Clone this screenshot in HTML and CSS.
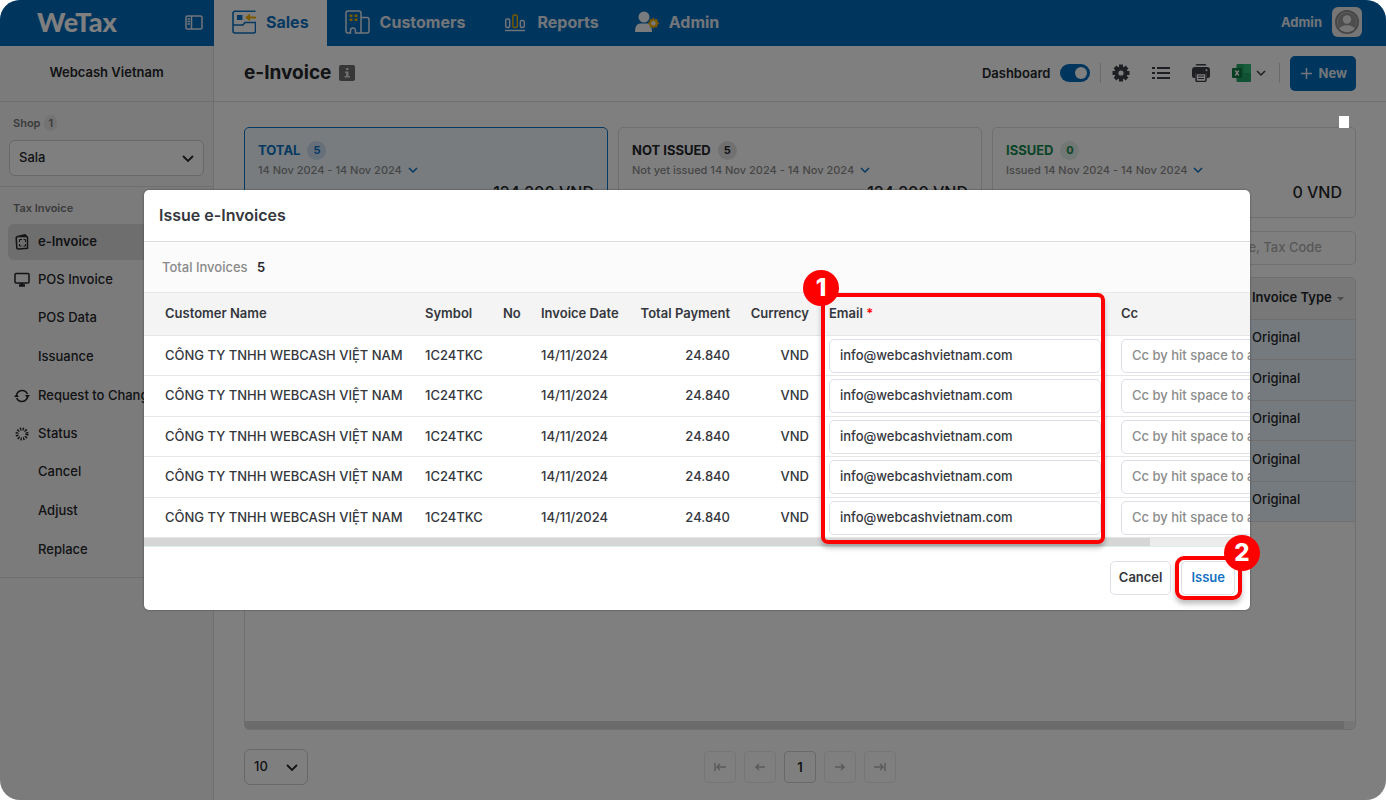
FILE: index.html
```html
<!DOCTYPE html>
<html lang="en">
<head>
<meta charset="utf-8">
<meta name="viewport" content="width=device-width, initial-scale=1">
<title>WeTax - e-Invoice</title>
<link rel="stylesheet" href="styles.css">
</head>
<body>
<div class="app">
  <header class="topbar">
    <div class="brand">
      <span class="logo">WeTax</span>
      <button class="icon-btn" aria-label="Toggle sidebar">
        <svg width="18" height="15" viewBox="0 0 18 15" fill="none" stroke="currentColor" stroke-width="1.5"><rect x="1" y="1" width="16" height="13" rx="1.5"/><path d="M6.5 1v13M2.5 4h2.500M2.500 6.500h2.500M2.500 9h2.500"/></svg>
      </button>
    </div>
    <nav class="tabs">
      <a class="tab tab-active" href="#">
        <svg width="24" height="24" viewBox="0 0 24 24" fill="none" stroke="#0a72c4" stroke-width="1.6"><path d="M23.500 1.200H3A2 2 0 0 0 1 3.200V21a2 2 0 0 0 2 2h18.500a2 2 0 0 0 2-2V12.500H13l-2 2.500H1"/><rect x="5" y="5" width="5.500" height="5" fill="#0a72c4" stroke="none"/><path d="M24 7.500h-7" stroke="#f5b301" stroke-width="2"/><path d="M18 3.800L13 7.500l5 3.700z" fill="#f5b301" stroke="none"/></svg>
        Sales
      </a>
      <a class="tab" href="#">
        <svg width="25" height="24" viewBox="0 0 25 24" fill="none" stroke="#e4eaf2" stroke-width="1.500"><path d="M16 23H22a2 2 0 0 0 2-2V9.500a2 2 0 0 0-2-2h-6M5.500 23H3a2 2 0 0 1-2-2V3a2 2 0 0 1 2-2h11a2 2 0 0 1 2 2v20h-5.500v-2.500a2.500 2.500 0 0 0-5 0z"/><path d="M4.500 4.500h3v2.500h-3zM9.500 4.500h3v2.500h-3zM4.500 8.500h3V11h-3zM9.500 8.500h3V11h-3z" fill="#f5b301" stroke="none"/></svg>
        Customers
      </a>
      <a class="tab" href="#">
        <svg width="26" height="24" viewBox="-2 0 26 24" fill="none" stroke="#e4eaf2" stroke-width="1.400"><rect x="2.700" y="9" width="4" height="8.500" rx="1.500"/><rect x="17.300" y="10.500" width="4" height="7" rx="1.500"/><rect x="9.900" y="5" width="4.400" height="12.500" rx="1.500" stroke="#f5b301"/><path d="M2 20.500h20"/></svg>
        Reports
      </a>
      <a class="tab" href="#">
        <svg width="24" height="22" viewBox="0 0 24 22"><circle cx="9" cy="6" r="5.500" fill="#f4f6f8"/><path d="M0 21c0-6 2-8.500 6-8.500h6c3 0 5 2.500 5 8.500z" fill="#f4f6f8"/><path d="M18.500 6.500l1.300 2 2.300-.6.400 2.400 1.500 1.900-1.500 1.900-.4 2.400-2.300-.6-1.300 2-1.400-2-2.200.6-.4-2.400-1.500-1.900 1.500-1.900.4-2.400 2.200.6z" fill="#f5b301"/><circle cx="18.400" cy="12.200" r="2.200" fill="#f4f6f8"/></svg>
        Admin
      </a>
    </nav>
    <div class="account">
      <span>Admin</span>
      <span class="avatar"><svg width="24" height="24" viewBox="0 0 24 24"><circle cx="12" cy="12" r="11" fill="#d4d4d4" stroke="#8c8c8c" stroke-width="2"/><circle cx="12" cy="12" r="9.500" fill="#9a9a9a"/><circle cx="12" cy="9.500" r="4.200" fill="#ececec"/><path d="M4.500 19c1.500-5 13.500-5 15 0a10.500 10.500 0 0 1-15 0z" fill="#ececec"/></svg></span>
    </div>
  </header>

  <div class="body">
    <aside class="sidebar">
      <div class="org">Webcash Vietnam</div>
      <div class="shop">
        <label class="side-label" for="shop">Shop <span class="count">1</span></label>
        <div class="select">
          <select id="shop"><option>Sala</option></select>
          <svg class="caret" width="12" height="8" viewBox="0 0 12 8" fill="none" stroke="currentColor" stroke-width="1.800"><path d="M1 1l5 5 5-5"/></svg>
        </div>
      </div>
      <nav class="menu">
        <div class="side-label">Tax Invoice</div>
        <ul>
          <li><a class="item item-active" href="#"><svg width="14" height="16" viewBox="0 0 14 16" fill="none" stroke="currentColor" stroke-width="1.500"><path d="M3 2.500L10 .8l1.500 1.500M3 2.500h8.500a1 1 0 0 1 1 1v10.800L3.500 15a1.500 1.500 0 0 1-1.700-1.400L1.200 4A1.500 1.500 0 0 1 3 2.500z"/><path d="M4.500 8V5.500H7M8.500 5.500h2V8M10.500 10v2h-2M6.500 12h-2v-2" stroke-width="1"/></svg>e-Invoice</a></li>
          <li><a class="item" href="#"><svg width="16" height="15" viewBox="0 0 16 15" fill="none" stroke="currentColor" stroke-width="1.500"><rect x="1" y="1.500" width="14" height="9.500" rx="1"/><path d="M5 13.500h6M8 11v2" stroke-width="2.500"/></svg>POS Invoice</a></li>
          <li><a class="item sub" href="#">POS Data</a></li>
          <li><a class="item sub" href="#">Issuance</a></li>
          <li><a class="item" href="#"><svg width="16" height="16" viewBox="0 0 16 16" fill="none" stroke="currentColor" stroke-width="1.600"><path d="M2.500 9A5.500 5.500 0 0 1 8 2.500c2.500 0 4.500 1.300 5.300 3.500M13.500 7A5.500 5.500 0 0 1 8 13.500c-2.500 0-4.500-1.300-5.300-3.500" /><path d="M11 7h5l-2.500 3zM0 9h5L2.500 6z" fill="currentColor" stroke="none"/></svg>Request to Change</a></li>
          <li><a class="item" href="#"><svg width="16" height="16" viewBox="0 0 16 16" fill="none" stroke="currentColor" stroke-width="3"><circle cx="8" cy="8" r="5" stroke-dasharray="1.310 1.308"/></svg>Status</a></li>
          <li><a class="item sub" href="#">Cancel</a></li>
          <li><a class="item sub" href="#">Adjust</a></li>
          <li><a class="item sub" href="#">Replace</a></li>
        </ul>
      </nav>
    </aside>

    <main class="main">
      <div class="titlebar">
        <h1>e-Invoice</h1>
        <svg width="16" height="16" viewBox="0 0 16 16"><rect width="16" height="16" rx="2" fill="#6e6e6e"/><path d="M7 3h2.500v2H7zM6 6.500h3.500V11H11v1.500H5.500V11H7V8H6z" fill="#ddd"/></svg>
        <div class="tools">
          <label class="dash">Dashboard <input type="checkbox" class="toggle" checked></label>
          <span class="vr"></span>
          <div class="tool-icons">
            <button class="icon-btn" aria-label="Settings"><svg width="18" height="18" viewBox="0 0 18 18"><g stroke="currentColor" stroke-width="4"><path d="M9 .5v17M.5 9h17M3 3l12 12M15 3L3 15"/></g><circle cx="9" cy="9" r="6.500" fill="currentColor"/><circle cx="9" cy="9" r="2.600" fill="#fff"/></svg></button>
            <button class="icon-btn" aria-label="List"><svg width="18" height="16" viewBox="0 0 18 16" stroke="currentColor" stroke-width="2"><path d="M0 3h3M0 8h3M0 13h3M5 3h13M5 8h13M5 13h13"/></svg></button>
            <button class="icon-btn" aria-label="Print"><svg width="18" height="18" viewBox="0 0 18 18"><path d="M3.500 1.500a1.500 1.500 0 0 1 1.500-1.500h8a1.500 1.500 0 0 1 1.500 1.500H3.500zM3 3h12a3 3 0 0 1 3 3v6a2 2 0 0 1-2 2h-1V9H3v5H2a2 2 0 0 1-2-2V6a3 3 0 0 1 3-3z" fill="currentColor"/><path d="M4 9.500h10V16a1.500 1.500 0 0 1-1.500 1.500h-7A1.500 1.500 0 0 1 4 16z" fill="#fff" stroke="currentColor" stroke-width="1.500"/><path d="M6 12h6M6 14.500h6" stroke="currentColor"/><circle cx="14.500" cy="6.300" r="1" fill="#fff"/></svg></button>
            <button class="icon-btn excel" aria-label="Export to Excel"><svg width="19" height="18" viewBox="0 0 19 18"><rect x="4.500" width="14.500" height="18" rx="1" fill="#21a366"/><path d="M11.500 0H18a1 1 0 0 1 1 1v8h-7.500z" fill="#2ebb78"/><rect y="4" width="10" height="10" rx="1" fill="#107c41"/><path d="M3.200 6.500l3.600 5M6.800 6.500l-3.600 5" stroke="#fff" stroke-width="1.300"/></svg><svg width="10" height="7" viewBox="0 0 10 7" fill="none" stroke="currentColor" stroke-width="1.500"><path d="M1 1l4 4 4-4"/></svg></button>
          </div>
          <span class="vr"></span>
          <button class="btn-new"><svg width="11" height="11" viewBox="0 0 11 11" stroke="currentColor" stroke-width="1.500"><path d="M5.500 0v11M0 5.500h11"/></svg>New</button>
        </div>
      </div>

      <div class="content">
        <div class="cards">
          <section class="card card-total">
            <h2>TOTAL <span class="pill">5</span></h2>
            <button class="range">14 Nov 2024 - 14 Nov 2024 <svg width="10" height="7" viewBox="0 0 10 7" fill="none" stroke="currentColor" stroke-width="1.500"><path d="M1 1l4 4 4-4"/></svg></button>
            <p class="amount">124.200 VND</p>
          </section>
          <section class="card">
            <h2>NOT ISSUED <span class="pill">5</span></h2>
            <button class="range">Not yet issued 14 Nov 2024 - 14 Nov 2024 <svg width="10" height="7" viewBox="0 0 10 7" fill="none" stroke="currentColor" stroke-width="1.500"><path d="M1 1l4 4 4-4"/></svg></button>
            <p class="amount">124.200 VND</p>
          </section>
          <section class="card card-issued">
            <h2>ISSUED <span class="pill">0</span></h2>
            <button class="range">Issued 14 Nov 2024 - 14 Nov 2024 <svg width="10" height="7" viewBox="0 0 10 7" fill="none" stroke="currentColor" stroke-width="1.500"><path d="M1 1l4 4 4-4"/></svg></button>
            <p class="amount">0 VND</p>
          </section>
        </div>
        <input class="search" type="text" aria-label="Search" placeholder="Customer Name, Tax Code">
        <div class="grid-box">
          <table class="grid">
            <thead><tr><th></th><th class="col-type">Invoice Type <svg width="7" height="4" viewBox="0 0 7 4"><path d="M0 0h7L3.500 4z" fill="#999"/></svg></th></tr></thead>
            <tbody>
              <tr><td></td><td>Original</td></tr>
              <tr><td></td><td>Original</td></tr>
              <tr><td></td><td>Original</td></tr>
              <tr><td></td><td>Original</td></tr>
              <tr><td></td><td>Original</td></tr>
            </tbody>
          </table>
          <div class="hbar"><div class="hthumb hthumb-page"></div></div>
        </div>
        <div class="pager">
          <div class="select select-size">
            <select aria-label="Rows per page"><option>10</option></select>
            <svg class="caret" width="12" height="8" viewBox="0 0 12 8" fill="none" stroke="currentColor" stroke-width="1.800"><path d="M1 1l5 5 5-5"/></svg>
          </div>
          <div class="pages">
            <button disabled aria-label="First page"><svg width="12" height="8" viewBox="0 0 12 8"><path d="M1 0v8M12 4H3M6 1L3 4l3 3"/></svg></button>
            <button disabled aria-label="Previous page"><svg width="12" height="8" viewBox="0 0 12 8"><path d="M11 4H2M5 1L2 4l3 3"/></svg></button>
            <button class="current">1</button>
            <button disabled aria-label="Next page"><svg width="12" height="8" viewBox="0 0 12 8"><path d="M1 4h9M7 1l3 3-3 3"/></svg></button>
            <button disabled aria-label="Last page"><svg width="12" height="8" viewBox="0 0 12 8"><path d="M11 0v8M0 4h9M6 1l3 3-3 3"/></svg></button>
          </div>
        </div>
      </div>
    </main>
  </div>

  <div class="overlay">
    <span class="spot"></span>
    <div class="modal-wrap">
      <div class="modal" role="dialog" aria-labelledby="dlg-title">
        <h2 class="modal-title" id="dlg-title">Issue e-Invoices</h2>
        <div class="summary">Total Invoices <strong>5</strong></div>
        <div class="scroller">
          <table class="invoices">
            <colgroup><col class="c-name"><col class="c-symbol"><col class="c-no"><col class="c-date"><col class="c-pay"><col class="c-cur"><col class="c-mail"><col class="c-cc"></colgroup>
            <thead><tr><th>Customer Name</th><th>Symbol</th><th>No</th><th>Invoice Date</th><th class="num">Total Payment</th><th class="num">Currency</th><th>Email <span class="req">*</span></th><th>Cc</th></tr></thead>
            <tbody>
              <tr><td>CÔNG TY TNHH WEBCASH VIỆT NAM</td><td>1C24TKC</td><td></td><td>14/11/2024</td><td class="num">24.840</td><td class="num">VND</td><td><input type="email" aria-label="Email" value="info@webcashvietnam.com"></td><td><input type="text" aria-label="Cc" placeholder="Cc by hit space to add"></td></tr>
              <tr><td>CÔNG TY TNHH WEBCASH VIỆT NAM</td><td>1C24TKC</td><td></td><td>14/11/2024</td><td class="num">24.840</td><td class="num">VND</td><td><input type="email" aria-label="Email" value="info@webcashvietnam.com"></td><td><input type="text" aria-label="Cc" placeholder="Cc by hit space to add"></td></tr>
              <tr><td>CÔNG TY TNHH WEBCASH VIỆT NAM</td><td>1C24TKC</td><td></td><td>14/11/2024</td><td class="num">24.840</td><td class="num">VND</td><td><input type="email" aria-label="Email" value="info@webcashvietnam.com"></td><td><input type="text" aria-label="Cc" placeholder="Cc by hit space to add"></td></tr>
              <tr><td>CÔNG TY TNHH WEBCASH VIỆT NAM</td><td>1C24TKC</td><td></td><td>14/11/2024</td><td class="num">24.840</td><td class="num">VND</td><td><input type="email" aria-label="Email" value="info@webcashvietnam.com"></td><td><input type="text" aria-label="Cc" placeholder="Cc by hit space to add"></td></tr>
              <tr><td>CÔNG TY TNHH WEBCASH VIỆT NAM</td><td>1C24TKC</td><td></td><td>14/11/2024</td><td class="num">24.840</td><td class="num">VND</td><td><input type="email" aria-label="Email" value="info@webcashvietnam.com"></td><td><input type="text" aria-label="Cc" placeholder="Cc by hit space to add"></td></tr>
            </tbody>
          </table>
        </div>
        <div class="hbar hbar-modal"><div class="hthumb hthumb-modal"></div></div>
        <div class="actions">
          <button class="btn">Cancel</button>
          <button class="btn btn-issue">Issue</button>
        </div>
      </div>
      <div class="ring ring-mail"><span class="step">1</span></div>
      <div class="ring ring-issue"><span class="step step-right">2</span></div>
    </div>
  </div>
</div>
</body>
</html>
```
FILE: styles.css
```css
* { box-sizing: border-box; }
body { margin: 0; background: #fff; font: 500 13px/20px Inter, "Noto Sans", sans-serif; color: #24262b; }
h1, h2, p, ul { margin: 0; padding: 0; }
ul { list-style: none; }
a { color: inherit; text-decoration: none; }
svg { flex: none; display: block; }
button, input, select { font: inherit; color: inherit; }
button { cursor: pointer; }
.icon-btn { display: flex; align-items: center; border: 0; padding: 0; background: none; }

.app { position: relative; display: flex; flex-direction: column; min-height: 100vh; border-radius: 20px; overflow: hidden; background: #fff; }

.topbar { display: flex; height: 46px; background: #006abc; color: #e4eaf2; }
.brand { display: flex; align-items: center; justify-content: space-between; width: 214px; padding: 0 11px 2px 37px; }
.logo { font: 900 27px/30px Lato, sans-serif; color: #fff; }
.tabs { display: flex; flex: 1; font-size: 16px; font-weight: 700; }
.tab { display: flex; align-items: center; gap: 10px; padding: 0 18px 2px; }
.tab-active { background: #fff; color: #0a72c4; }
.account { display: flex; align-items: center; gap: 10px; padding: 0 24px 2px 0; font-weight: 700; }
.avatar { display: grid; place-items: center; width: 30px; height: 30px; border-radius: 6px; background: #ececec; }

.body { display: flex; flex: 1; }
.sidebar { width: 214px; border-right: 1px solid #dedede; background: #f7f7f7; }
.org { height: 56px; border-bottom: 1px solid #dedede; line-height: 52px; text-align: center; font-weight: 600; }
.shop { padding: 11px 9px 10px; border-bottom: 1px solid #dedede; }
.side-label { display: flex; align-items: center; gap: 4px; padding-left: 4px; font-size: 11px; font-weight: 600; color: #777; }
.count { padding: 0 4px; border-radius: 8px; background: #e6e6e6; line-height: 16px; }
.select { position: relative; margin-top: 7px; }
.select select { width: 100%; height: 36px; padding: 0 9px 2px; border: 1px solid #d0d0d0; border-radius: 6px; background: #fff; appearance: none; }
.caret { position: absolute; right: 10px; top: 15px; pointer-events: none; }
.menu { padding: 11px 8px 8px; border-bottom: 1px solid #dedede; }
.menu .side-label { margin-bottom: 6px; padding-left: 5px; }
.menu ul { display: grid; gap: 2px; }
.item { display: flex; align-items: flex-start; gap: 8px; height: 36px; padding: 0 6px; border-radius: 6px; line-height: 34px; white-space: nowrap; }
.item svg { width: 16px; margin-top: 10px; }
.item-active { background: #dcdcdc; font-weight: 600; }
.sub { height: 37px; padding-left: 30px; }

.main { display: flex; flex-direction: column; flex: 1; min-width: 0; }
.titlebar { display: flex; align-items: center; gap: 8px; height: 56px; padding: 0 30px 1px; border-bottom: 1px solid #dedede; }
h1 { font-size: 19px; line-height: 28px; font-weight: 700; }
.tools { display: flex; align-items: center; gap: 10px; margin-left: auto; color: #3c3e47; }
.tool-icons { display: flex; gap: 22px; padding: 0 3px 0 1px; }
.excel { gap: 5px; }
.dash { display: flex; align-items: center; gap: 10px; color: #24262b; font-weight: 600; }
.toggle { appearance: none; width: 30px; height: 18px; margin: 0; padding: 3px; border-radius: 9px; background: #006abc; }
.toggle::before { content: ""; display: block; width: 12px; height: 12px; margin-left: auto; border-radius: 50%; background: #fff; }
.vr { width: 1px; height: 20px; background: #d4d4d4; }
.btn-new { display: flex; align-items: center; gap: 6px; height: 35px; padding: 0 9px 0 11px; border: 0; border-radius: 5px; background: #006abc; color: #e4eaf2; font-weight: 700; }

.content { display: flex; flex-direction: column; flex: 1; padding: 25px 30px 15px; }
.cards { display: grid; grid-template-columns: repeat(3, 1fr); gap: 10px; }
.card { display: flex; flex-direction: column; height: 91px; padding: 12px 13px; border: 1px solid #dedede; border-radius: 5px; }
.card h2 { display: flex; align-items: center; gap: 7px; font-size: 13px; line-height: 20px; font-weight: 700; }
.pill { width: 19px; height: 19px; border-radius: 50%; background: #e2e2e2; text-align: center; font-size: 11px; line-height: 19px; }
.range { display: flex; align-items: center; gap: 6px; padding: 0; border: 0; background: none; color: #8c8c8c; font-size: 11px; line-height: 20px; }
.range svg { color: #0a72c4; }
.amount { text-align: right; font-size: 16px; line-height: 24px; }
.card-total { border-color: #0a72c4; background: #f0f9ff; }
.card-total h2 { color: #0a72c4; }
.card-total .pill { background: #cfe0f5; }
.card-issued h2 { color: #168a4e; }
.card-issued .pill { background: #e4f1ea; }
.search { align-self: flex-end; width: 300px; height: 34px; margin: 13px 0 12px; padding: 0 33px 2px 12px; border: 1px solid #dedede; border-radius: 5px; background: #fff; text-align: right; }
.search::placeholder { color: #b0b0b0; opacity: 1; }
.grid-box { display: flex; flex-direction: column; flex: 1; border: 1px solid #dedede; border-radius: 5px; overflow: hidden; }
.grid { width: 100%; border-collapse: collapse; }
.grid th { height: 41px; padding: 0 0 2px; background: #f0f0f0; font-weight: 600; text-align: left; border-bottom: 1px solid #dedede; }
.grid th svg { display: inline-block; vertical-align: middle; margin-left: 2px; }
.grid td { height: 40px; padding: 0 0 4px; background: #ebf5fc; border-bottom: 1px solid #dedede; }
.grid tr:nth-child(even) td { height: 41px; }
.grid .col-type { width: 103px; }
.hbar { height: 8px; margin-top: auto; background: #ececec; }
.hthumb { height: 100%; background: #d6d6d6; }
.hthumb-page { width: 99%; }
.pager { display: grid; grid-template-columns: 1fr auto 1fr; align-items: center; margin-top: 19px; }
.select-size { width: 64px; margin: 0; }
.pages { display: flex; gap: 8px; }
.pages button { display: grid; place-items: center; width: 32px; height: 32px; padding: 0; border: 1px solid #ececec; border-radius: 4px; background: none; }
.pages .current { border-color: #d0d0d0; font-weight: 600; }
.pages svg { fill: none; stroke: #b4b4b4; stroke-width: 1.5px; }

.overlay { position: absolute; inset: 0; display: flex; align-items: center; padding: 0 136px 0 144px; background: rgba(0, 0, 0, .5); }
.spot { position: absolute; top: 116px; right: 37px; width: 10px; height: 12px; background: #fff; }
.modal-wrap { position: relative; flex: 1; min-width: 0; }
.modal { border-radius: 5px; background: #fff; color: #34373d; overflow: hidden; box-shadow: 0 0 2px rgba(0, 0, 0, .5); }
.modal-title { padding: 0 15px; border-bottom: 1px solid #dcdcdc; font-size: 16px; line-height: 51px; font-weight: 600; }
.summary { padding: 0 18px; background: #fbfbfb; color: #8a8a8a; line-height: 50px; border-bottom: 1px solid #e8e8e8; }
.summary strong { margin-left: 6px; color: #24262b; font-weight: 600; }
.scroller { overflow: hidden; }
.invoices { width: 1215px; table-layout: fixed; border-collapse: collapse; }
.invoices th, .invoices td { padding: 0 10px; text-align: left; white-space: nowrap; border-bottom: 1px solid #e6e6e6; }
.invoices th { height: 43px; padding-bottom: 2px; background: #f4f4f4; font-weight: 600; }
.invoices td { height: 40px; }
.invoices tr:nth-child(even) td { height: 41px; }
.invoices tr > :first-child { padding-left: 21px; }
.invoices tr > .num { text-align: right; }
.invoices td:not(:has(input)) { padding-bottom: 2px; }
.invoices input { display: block; width: 100%; height: 34px; padding: 0 10px 2px; border: 1px solid #dcdfe6; border-radius: 5px; background: #fff; }
.invoices input::placeholder { color: #8c8c8c; opacity: 1; }
.c-name { width: 271px; }
.c-symbol { width: 78px; }
.c-no { width: 38px; }
.c-date { width: 99px; }
.c-pay { width: 110px; }
.c-cur { width: 79px; }
.c-mail { width: 292px; }
.c-cc { width: 248px; }
.req { color: #f00; }
.hbar-modal { border-bottom: 1px solid #dff0e8; height: 9px; }
.hthumb-modal { width: 91%; }
.actions { display: flex; justify-content: flex-end; gap: 10px; padding: 14px 15px 15px; }
.btn { height: 34px; padding: 0 8px 2px; border: 1px solid #dcdfe6; border-radius: 5px; background: #fff; font-weight: 600; }
.btn-issue { color: #1673c4; padding: 0 9px 2px; }

.ring { position: absolute; border: 4px solid #f00; border-radius: 7px; box-shadow: 0 4px 5px rgba(0, 0, 0, .25); pointer-events: none; }
.ring-mail { left: 677px; top: 103px; width: 284px; height: 251px; }
.ring-issue { right: 8px; bottom: 10px; width: 67px; height: 44px; border-radius: 9px; }
.step { position: absolute; left: -22px; top: -27px; width: 36px; height: 36px; border-radius: 50%; background: #f00; color: #fff; text-align: center; font: 800 24px/36px Inter, sans-serif; }
.step-right { left: auto; right: -22px; top: -25px; }
```
